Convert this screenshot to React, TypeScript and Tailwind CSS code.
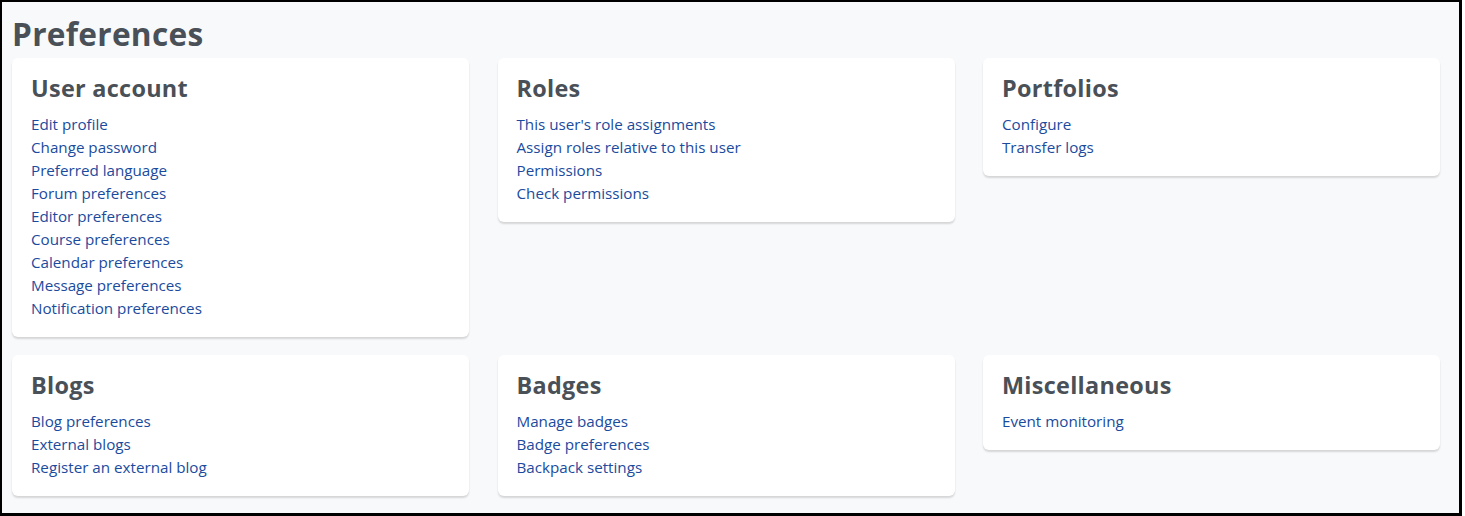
const SECTIONS = [
  {
    title: "User account",
    links: [
      "Edit profile",
      "Change password",
      "Preferred language",
      "Forum preferences",
      "Editor preferences",
      "Course preferences",
      "Calendar preferences",
      "Message preferences",
      "Notification preferences",
    ],
  },
  {
    title: "Roles",
    links: [
      "This user's role assignments",
      "Assign roles relative to this user",
      "Permissions",
      "Check permissions",
    ],
  },
  {
    title: "Portfolios",
    links: ["Configure", "Transfer logs"],
  },
  {
    title: "Blogs",
    links: ["Blog preferences", "External blogs", "Register an external blog"],
  },
  {
    title: "Badges",
    links: ["Manage badges", "Badge preferences", "Backpack settings"],
  },
  {
    title: "Miscellaneous",
    links: ["Event monitoring"],
  },
];

function SectionCard({ title, links }: { title: string; links: string[] }) {
  return (
    <div className="rounded-md bg-white pr-5 pl-[19px] pt-[17px] pb-[17px] shadow-[0_2px_2px_rgba(0,0,0,0.14)]">
      <h3 className="mb-[11px] font-['Open_Sans',sans-serif] text-[23.4px] font-bold leading-[27px] tracking-[0.3px] text-[#495057]">
        {title}
      </h3>
      <ul className="flex flex-col font-['Open_Sans',sans-serif] text-[15.2px] leading-[23px]">
        {links.map((link) => (
          <li key={link} className="h-[23px]">
            <a href="#" className="text-[#1a4b9e]">
              {link}
            </a>
          </li>
        ))}
      </ul>
    </div>
  );
}

export default function App() {
  return (
    <div className="h-[516px] w-[1465px] bg-white">
      <div className="h-[516px] w-[1462px] border-t-2 border-r-3 border-b-3 border-l-2 border-black bg-[#f8f9fa] pl-[10px]">
        <h2 className="pt-[13px] pb-[6px] font-['Open_Sans',sans-serif] text-[31.6px] font-bold leading-[37px] tracking-[0.3px] text-[#495057]">
          Preferences
        </h2>
        <div className="grid w-[1428px] grid-cols-3 items-start gap-x-[28.5px] gap-y-[18px]">
          {SECTIONS.map((s) => (
            <SectionCard key={s.title} title={s.title} links={s.links} />
          ))}
        </div>
      </div>
    </div>
  );
}
